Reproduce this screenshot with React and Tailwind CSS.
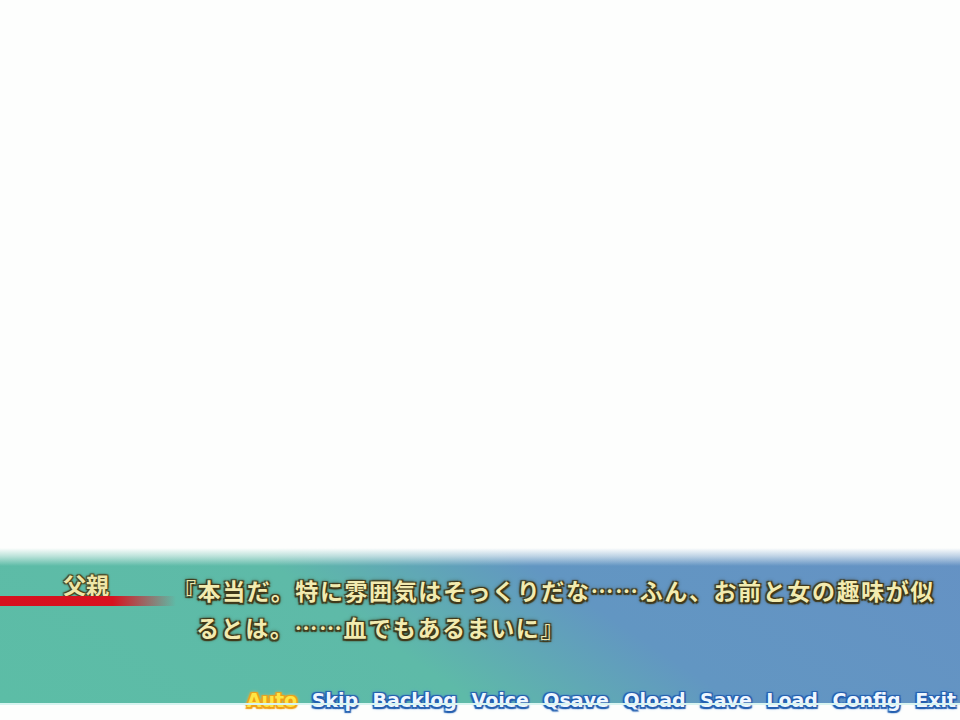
export default function App() {
  const jp = "[font-family:'Noto_Sans_CJK_JP',sans-serif]";
  const menu = ["Skip", "Backlog", "Voice", "Qsave", "Qload", "Save", "Load", "Config", "Exit"];
  return (
    <div className="w-[960px] h-[720px] bg-[#fdfefd] flex flex-col overflow-hidden">
      <div className="flex-1" />
      <div className="h-[155px] flex flex-col bg-[linear-gradient(to_bottom,#fdfefd_0px,rgba(253,254,253,0.6)_8px,rgba(253,254,253,0)_18px),linear-gradient(34deg,#5cbda6_0%,#5ebaa8_40%,#6296c2_62%,#6592c4_100%)]">
        <div className="flex pt-[24px]">
          <div className="w-[176px] flex flex-col">
            <div className={`${jp} pl-[63px] text-[23px] leading-[24px] font-bold text-[#eee6a8] [text-shadow:0_0_1px_#4a4420,1px_1px_1px_#4a4420,-1px_-1px_1px_#4a4420,1px_-1px_1px_#4a4420,-1px_1px_1px_#4a4420,0_0_3px_#4a4420]`}>
              父親
            </div>
            <div className="h-[10px] w-[176px] bg-[linear-gradient(to_right,#d6101e_0%,#d8121f_64%,rgba(216,18,31,0)_100%)]" />
          </div>
          <div className={`${jp} ml-[-3px] text-[23px] leading-[37px] tracking-[1.6px] font-bold text-[#f2ebb0] [text-shadow:0_0_1px_#40391a,1.5px_1.5px_1px_#40391a,-1.5px_-1.5px_1px_#40391a,1.5px_-1.5px_1px_#40391a,-1.5px_1.5px_1px_#40391a,0_0_4px_#3a3418]`}>
            <div>『本当だ。特に雰囲気はそっくりだな……ふん、お前と女の趣味が似</div>
            <div className="pl-[23px]">るとは。……血でもあるまいに』</div>
          </div>
        </div>
        <div className="mt-auto mb-[-9px] flex justify-end items-center gap-[14.5px] pr-[4px] h-[24px] leading-[24px] text-[19px] font-bold [font-family:'DejaVu_Sans',sans-serif]">
          <span className="text-[#ffe545] [text-shadow:0_0_1px_#e89a10,1.5px_1.5px_1px_#f0a018,-1.5px_-1.5px_1px_#f0a018,1.5px_-1.5px_1px_#f0a018,-1.5px_1.5px_1px_#f0a018,0_0_4px_#ffd060]">Auto</span>
          {menu.map((m) => (
            <span key={m} className="text-[#eef6ff] [text-shadow:0_0_1px_#1d56a6,1.5px_1.5px_1px_#2560b0,-1.5px_-1.5px_1px_#2560b0,1.5px_-1.5px_1px_#2560b0,-1.5px_1.5px_1px_#2560b0,0_0_4px_#5a9ae0]">
              {m}
            </span>
          ))}
        </div>
      </div>
      <div className="h-[17px] border-t-[2px] border-[#d8f4f0]" />
    </div>
  );
}
